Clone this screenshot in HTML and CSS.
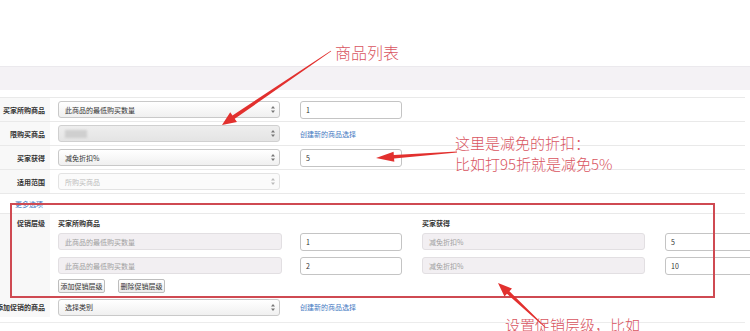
FILE: index.html
```html
<!DOCTYPE html>
<html lang="zh-CN">
<head>
<meta charset="utf-8">
<title>促销设置</title>
<link rel="stylesheet" href="styles.css">
</head>
<body>
<div class="page">
  <div class="top"></div>
  <div class="band"></div>
  <div class="spacer"></div>
  <div class="rows">
    <div class="row">
      <div class="lbl">买家所购商品</div>
      <div class="fld">
        <div class="select"><span>此商品的最低购买数量</span><svg class="updown" width="4" height="7" viewBox="0 0 4 7"><path d="M2 0 L4 2.5 H0Z M2 7 L4 4.5 H0Z" fill="#777"/></svg></div>
        <div class="input">1</div>
      </div>
    </div>
    <div class="row">
      <div class="lbl">限购买商品</div>
      <div class="fld">
        <div class="select disabled"><span class="redact"></span><svg class="updown" width="4" height="7" viewBox="0 0 4 7"><path d="M2 0 L4 2.5 H0Z M2 7 L4 4.5 H0Z" fill="#777"/></svg></div>
        <a class="link">创建新的商品选择</a>
      </div>
    </div>
    <div class="row">
      <div class="lbl">买家获得</div>
      <div class="fld">
        <div class="select"><span>减免折扣%</span><svg class="updown" width="4" height="7" viewBox="0 0 4 7"><path d="M2 0 L4 2.5 H0Z M2 7 L4 4.5 H0Z" fill="#777"/></svg></div>
        <div class="input">5</div>
      </div>
    </div>
    <div class="row">
      <div class="lbl">适用范围</div>
      <div class="fld">
        <div class="select faded"><span>所购买商品</span><svg class="updown" width="4" height="7" viewBox="0 0 4 7"><path d="M2 0 L4 2.5 H0Z M2 7 L4 4.5 H0Z" fill="#bbb"/></svg></div>
      </div>
    </div>
    <div class="more"><a class="link-plain">更多选项</a></div>
    <div class="row tiers-row">
      <div class="lbl top-lbl">促销层级</div>
      <div class="tiers">
        <div class="tier-head">
          <div class="c1">买家所购商品</div>
          <div class="c2"></div>
          <div class="c3">买家获得</div>
        </div>
        <div class="tier">
          <div class="c1 dis">此商品的最低购买数量</div>
          <div class="c2 inp">1</div>
          <div class="c3 dis">减免折扣%</div>
          <div class="c4 inp">5</div>
        </div>
        <div class="tier">
          <div class="c1 dis">此商品的最低购买数量</div>
          <div class="c2 inp">2</div>
          <div class="c3 dis">减免折扣%</div>
          <div class="c4 inp">10</div>
        </div>
        <div class="btns">
          <button class="btn">添加促销层级</button>
          <button class="btn">删除促销层级</button>
        </div>
      </div>
    </div>
    <div class="row last">
      <div class="lbl">添加促销的商品</div>
      <div class="fld">
        <div class="select"><span>选择类别</span><svg class="updown" width="4" height="7" viewBox="0 0 4 7"><path d="M2 0 L4 2.5 H0Z M2 7 L4 4.5 H0Z" fill="#777"/></svg></div>
        <a class="link">创建新的商品选择</a>
      </div>
    </div>
  </div>

  <div class="frame"></div>
  <svg class="arrows" width="750" height="331" viewBox="0 0 750 331">
    <polygon fill="#e2302e" points="331.22,51.33 234.72,118.79 236.97,122.1 222,125 230.23,112.16 232.48,115.47 330.78,50.67"/>
    <polygon fill="#e2302e" points="457.04,152.5 394.08,158.46 394.32,161.66 376,158 393.58,151.68 393.82,154.88 456.96,151.5"/>
    <polygon fill="#e2302e" points="545.34,326.64 509.45,291.25 511.98,288.55 498,283 504.46,296.58 506.99,293.87 544.66,327.37"/>
  </svg>
  <div class="note n1">商品列表</div>
  <div class="note n2">这里是减免的折扣：<br>比如打95折就是减免5%</div>
  <div class="note n3">设置促销层级，比如</div>
</div>
</body>
</html>
```

FILE: styles.css
```css
html, body {
  margin: 0;
  padding: 0;
  overflow: hidden;
  background: #fff;
}
body {
  width: 750px;
  height: 331px;
  font-family: "Noto Sans CJK SC", "Noto Sans", sans-serif;
  font-size: 7px;
  color: #333;
}
.page {
  position: relative;
  width: 750px;
  height: 331px;
  overflow: hidden;
}
.top { height: 66px; }
.band {
  height: 23px;
  background: #f4f2f5;
  border-top: 1px solid #ebe9ed;
}
.spacer { height: 7px; }
.rows { width: 745px; }
.row {
  display: grid;
  grid-template-columns: 50px 1fr;
  height: 24px;
  box-sizing: border-box;
  border-top: 1px solid #e9e9e9;
}
.lbl {
  background: #f8f8f8;
  display: flex;
  align-items: center;
  justify-content: flex-end;
  padding-right: 5px;
  font-weight: 700;
  white-space: nowrap;
  color: #333;
}
.fld {
  display: flex;
  align-items: center;
  padding-left: 8px;
}
.select {
  width: 222px;
  height: 17px;
  box-sizing: border-box;
  border: 1px solid #c9c9c9;
  border-radius: 3px;
  background: linear-gradient(#ffffff, #f0f0f0);
  display: flex;
  align-items: center;
  justify-content: space-between;
  padding: 0 4px 0 6px;
  color: #333;
}
.select.disabled {
  background: linear-gradient(#eeeeee, #e4e4e4);
  border-color: #d0d0d0;
}
.select.faded {
  background: #fbfbfb;
  border-color: #e3e3e3;
  color: #bbb;
}
.redact {
  display: block;
  width: 22px;
  height: 8px;
  background: #cfcfcf;
  filter: blur(1px);
}
.input {
  width: 102px;
  height: 18px;
  margin-left: 20px;
  box-sizing: border-box;
  border: 1px solid #c4c4c4;
  border-radius: 3px;
  background: #fff;
  display: flex;
  align-items: center;
  padding-left: 5px;
  color: #333;
}
.link {
  margin-left: 20px;
  color: #3f78bf;
  text-decoration: none;
}
.link-plain {
  color: #3f78bf;
  text-decoration: none;
}
.more {
  height: 20px;
  box-sizing: border-box;
  border-top: 1px solid #e9e9e9;
  display: flex;
  align-items: center;
  padding-left: 15px;
}
.tiers-row { height: 84px; }
.top-lbl {
  align-items: flex-start;
  padding-top: 4px;
}
.tiers {
  padding: 2px 0 0 8px;
  display: flex;
  flex-direction: column;
}
.tier-head, .tier {
  display: flex;
  align-items: center;
  white-space: nowrap;
}
.tier-head {
  height: 14px;
  font-weight: 700;
  margin-bottom: 3px;
}
.tier { height: 17px; margin-bottom: 7px; }
.tier + .btns { margin-top: -2px; }
.c1 { width: 224px; flex: none; }
.c2 { width: 102px; margin-left: 18px; flex: none; }
.c3 { width: 223px; margin-left: 20px; flex: none; }
.c4 { width: 102px; margin-left: 20px; flex: none; }
.dis {
  height: 17px;
  box-sizing: border-box;
  background: #f2eff2;
  border: 1px solid #e2dfe2;
  border-radius: 3px;
  color: #a0a0a0;
  display: flex;
  align-items: center;
  padding-left: 6px;
}
.inp {
  height: 18px;
  box-sizing: border-box;
  border: 1px solid #c4c4c4;
  border-radius: 3px;
  background: #fff;
  display: flex;
  align-items: center;
  padding-left: 5px;
  color: #333;
}
.btns {
  display: flex;
  gap: 13px;
}
.btn {
  font-family: inherit;
  font-size: 7px;
  height: 14px;
  width: 47px;
  padding: 0;
  margin: 0;
  border: 1px solid #bdbdbd;
  border-radius: 2px;
  background: linear-gradient(#ffffff, #ececec);
  color: #333;
  display: flex;
  align-items: center;
  justify-content: center;
}
.row.last {
  border-top: none;
  height: 20px;
}
.rows::after {
  content: "";
  display: block;
  border-top: 1px solid #ececec;
  margin-top: 5px;
}
.frame {
  position: absolute;
  left: 10px;
  top: 203px;
  width: 705px;
  height: 95px;
  box-sizing: border-box;
  border: 2px solid #cf4a52;
}
.arrows {
  position: absolute;
  left: 0;
  top: 0;
  pointer-events: none;
}
.note {
  position: absolute;
  color: #d9555f;
  font-family: "Noto Sans CJK SC", sans-serif;
  font-weight: 300;
  white-space: nowrap;
}
.n1 { left: 335px; top: 42px; font-size: 16px; line-height: 20px; }
.n2 { left: 455px; top: 132px; font-size: 15px; line-height: 21px; }
.n3 { left: 505px; top: 315px; font-size: 15px; line-height: 20px; }
```
